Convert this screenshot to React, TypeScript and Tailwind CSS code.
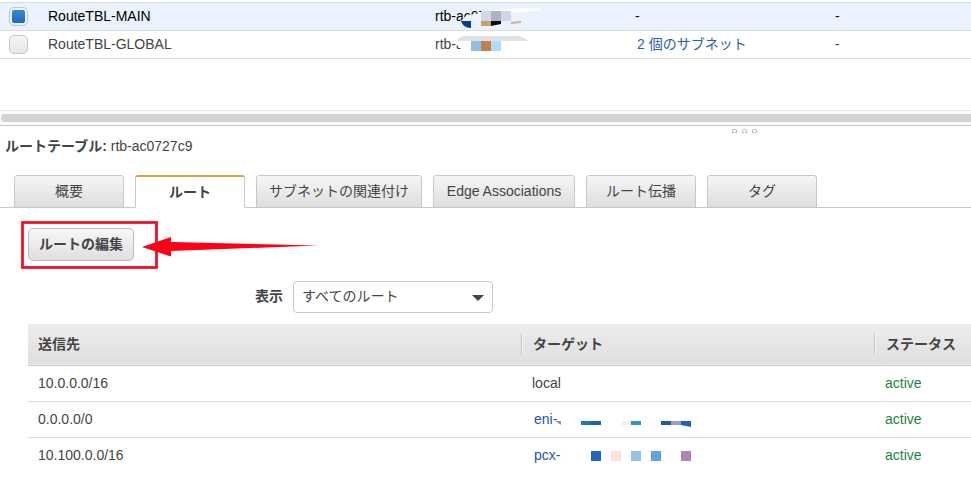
import { useState } from 'react'
import type { ReactNode } from 'react'
import clsx from 'clsx'

const tabs = [
  { label: '概要', width: 'min-w-[110px]' },
  { label: 'ルート', width: 'min-w-[110px]' },
  { label: 'サブネットの関連付け', width: 'min-w-[166px]' },
  { label: 'Edge Associations', width: 'min-w-[142px]' },
  { label: 'ルート伝播', width: 'min-w-[110px]' },
  { label: 'タグ', width: 'min-w-[110px]' },
]

type RouteTable = {
  name: string
  id: string
  mask: ReactNode
  subnets: string | null
}

const routeTables: RouteTable[] = [
  {
    name: 'RouteTBL-MAIN',
    id: 'rtb-ac072',
    subnets: null,
    mask: (
      <>
        <path d="M37 17 L42 12 L58 10 L76 8 H120 V26 H41 Z" fill="#eaf2fd" />
        <path d="M50 10 Q85 5 112 5 Q118 5 114 8 L76 10 Z" fill="#ffffff" />
        <rect x="56" y="8" width="10" height="10" fill="#d3d8e9" />
        <rect x="66" y="8" width="10" height="10" fill="#aab4cb" />
        <rect x="76" y="8" width="10" height="10" fill="#d2d5e8" />
        <path d="M36 18 H46 V25 Q38 25 36 18 Z" fill="#0d3b88" />
        <rect x="56" y="18" width="10" height="5" fill="#c9a061" />
        <path d="M66 18 H76 V21 L66 23 Z" fill="#0a0a0a" />
        <path d="M86 19 L96 18 V20 L86 21 Z" fill="#cfb096" />
      </>
    ),
  },
  {
    name: 'RouteTBL-GLOBAL',
    id: 'rtb-a',
    subnets: '2 個のサブネット',
    mask: (
      <>
        <path d="M32 4 V14 L39 20 H60 V4 Z" fill="#ffffff" />
        <path d="M32 10 Q34 5 40 5 L92 5 Q100 6 103 10 Z" fill="#e0e1e2" />
        <rect x="46" y="10" width="10" height="10" fill="#8fbfe5" />
        <rect x="56" y="10" width="10" height="10" fill="#c27f46" />
        <rect x="66" y="10" width="10" height="10" fill="#afdcfa" />
      </>
    ),
  },
]

type Route = {
  destination: string
  target: string
  mask?: ReactNode
}

const routes: Route[] = [
  { destination: '10.0.0.0/16', target: 'local' },
  {
    destination: '0.0.0.0/0',
    target: 'eni-',
    mask: (
      <>
        <path d="M34 19 H40 V23 Z" fill="#b07fb4" />
        <rect x="60" y="19" width="10" height="4" fill="#2374c4" />
        <rect x="70" y="19" width="10" height="4" fill="#1f62b2" />
        <rect x="100" y="19" width="10" height="4" fill="#fdf0de" />
        <rect x="110" y="19" width="10" height="4" fill="#2f93cf" />
        <rect x="140" y="19" width="10" height="4" fill="#1b5ca8" />
        <rect x="150" y="19" width="10" height="4" fill="#a09ac8" />
        <path d="M160 19 H170 V25 L160 23 Z" fill="#1f64b5" />
      </>
    ),
  },
  {
    destination: '10.100.0.0/16',
    target: 'pcx-',
    mask: (
      <>
        <rect x="70" y="13" width="10" height="10" fill="#1f66b8" />
        <rect x="90" y="13" width="10" height="10" fill="#fde3dc" />
        <rect x="110" y="13" width="10" height="10" fill="#93c4e6" />
        <rect x="130" y="13" width="10" height="10" fill="#62a3d9" />
        <rect x="160" y="13" width="10" height="10" fill="#b186b6" />
      </>
    ),
  },
]

function RouteTableList() {
  const [selected, setSelected] = useState('RouteTBL-MAIN')

  return (
    <section className="pt-0.5">
      <table className="w-full table-fixed border-collapse border-t border-[#d9dcdf] text-left">
        <colgroup>
          <col className="w-[38px]" />
          <col className="w-[387px]" />
          <col className="w-[200px]" />
          <col className="w-[200px]" />
          <col />
        </colgroup>
        <tbody>
          {routeTables.map((table) => {
            const checked = table.name === selected
            return (
              <tr
                key={table.name}
                className={clsx(
                  'h-7 border-b border-[#dcdddf]',
                  checked ? 'bg-[#eaf2fd] text-black' : 'text-[#444444]'
                )}
              >
                <td className="pl-[9px]">
                  <input
                    type="checkbox"
                    aria-label={table.name}
                    checked={checked}
                    onChange={() => setSelected(table.name)}
                    className="block size-[19px] appearance-none rounded-[5px] border border-[#c4c6c9] bg-gradient-to-b from-[#f6f6f6] to-[#e6e6e6] bg-clip-border p-0.5 checked:bg-[#eef3fb] checked:from-[#3d8ad8] checked:to-[#1c66bb] checked:bg-clip-content"
                  />
                </td>
                <td className="pb-0.5 pl-2.5">{table.name}</td>
                <td className="relative pb-0.5 pl-2.5">
                  {table.id}
                  <svg className="absolute top-0 left-0 h-7 w-[130px]" aria-hidden="true">
                    {table.mask}
                  </svg>
                </td>
                <td className="pb-0.5 pl-2.5">
                  {table.subnets ? (
                    <a href="#subnets" className="pl-0.5 text-[#2d5fa8]">
                      {table.subnets}
                    </a>
                  ) : (
                    '-'
                  )}
                </td>
                <td className="pb-0.5 pl-2.5">-</td>
              </tr>
            )
          })}
        </tbody>
      </table>

      {/* Horizontal scroll track */}
      <div className="mt-[51px] border-t border-[#e6e6e6] border-b border-b-[#c6c6c6] bg-[#fafafa] py-[3px]">
        <div className="ml-px h-2 rounded-l-full bg-[#d2d2d2]" />
      </div>
    </section>
  )
}

function SplitHandle() {
  return (
    <svg className="ml-[732px] block h-2.5 w-[26px]" fill="none" stroke="#b9b9b9" aria-hidden="true">
      <path d="M0.5 6 V4 L1.5 3.5 H3.5 L4.5 4 V6 M0 6.5 H2 M3 6.5 H5" />
      <path d="M10.5 6 V4 L11.5 3.5 H13.5 L14.5 4 V6 M10 6.5 H12 M13 6.5 H15" />
      <path d="M20.5 6 V4 L21.5 3.5 H23.5 L24.5 4 V6 M20 6.5 H22 M23 6.5 H25" />
    </svg>
  )
}

function Tabs() {
  const [active, setActive] = useState('ルート')

  return (
    <div role="tablist" className="flex gap-[11px] border-b border-[#c8c8c8] pl-3.5">
      {tabs.map(({ label, width }) => (
        <button
          key={label}
          role="tab"
          aria-selected={label === active}
          onClick={() => setActive(label)}
          className={clsx(
            '-mb-px h-[33px] rounded-t-[3px] border px-3 leading-5 whitespace-nowrap',
            width,
            label === active
              ? 'border-x-[#c8c8c8] border-t-2 border-t-[#e0a045] border-b-white bg-white font-bold'
              : 'border-[#c8c8c8] bg-gradient-to-b from-[#f6f6f6] to-[#dedede] pb-0.5'
          )}
        >
          {label}
        </button>
      ))}
    </div>
  )
}

function EditRoutes() {
  return (
    <div className="relative mt-5 ml-7 w-fit">
      <button className="h-[33px] rounded-[5px] border border-[#bcbcbc] bg-gradient-to-b from-[#f7f7f7] to-[#dfdfdf] px-2.5 pb-0.5 font-bold">
        ルートの編集
      </button>
      {/* Red frame and arrow */}
      <svg
        className="pointer-events-none absolute -top-2 -left-2 h-[50px] w-[300px]"
        aria-hidden="true"
      >
        <rect x="2.5" y="2.5" width="134" height="45" fill="none" stroke="#ee1125" strokeWidth="2.8" />
        <path d="M122 27 L151 17 V22 L298 25.5 L151 31 V36.5 Z" fill="#fb0017" />
      </svg>
    </div>
  )
}

function RouteFilter() {
  return (
    <div className="mt-5 ml-[255px] flex items-center gap-2.5">
      <label htmlFor="route-filter" className="pb-0.5 font-bold">
        表示
      </label>
      <div className="relative">
        <select
          id="route-filter"
          className="block h-8 w-[200px] appearance-none rounded-[4px] border border-[#c8c8c8] bg-white px-2 pb-0.5"
        >
          <option>すべてのルート</option>
        </select>
        <svg
          className="pointer-events-none absolute top-3.5 right-[9px] h-1.5 w-3"
          viewBox="0 0 12 6"
          fill="#444444"
          aria-hidden="true"
        >
          <path d="M0 0 H12 L6 6 Z" />
        </svg>
      </div>
    </div>
  )
}

function RoutesTable() {
  return (
    <div className="mt-[11px] pl-7">
      <table className="w-full table-fixed border-collapse text-left">
        <colgroup>
          <col />
          <col className="w-[353px]" />
          <col className="w-[97px]" />
        </colgroup>
        <thead>
          <tr className="h-[41px] border-b border-[#c6c6c6] bg-gradient-to-b from-[#ededed] to-[#dfdfdf]">
            <th className="pl-2.5">送信先</th>
            <th>
              <div className="h-5 border-l border-[#c4c4c4] pl-[11px] leading-5 shadow-[inset_1px_0_0_#f6f6f6]">
                ターゲット
              </div>
            </th>
            <th>
              <div className="h-5 border-l border-[#c4c4c4] pl-[11px] leading-5 whitespace-nowrap shadow-[inset_1px_0_0_#f6f6f6]">
                ステータス
              </div>
            </th>
          </tr>
        </thead>
        <tbody>
          {routes.map((route) => (
            <tr key={route.destination} className="h-9 border-b border-[#dcdcdc] last:border-b-0">
              <td className="pl-2.5">{route.destination}</td>
              <td className="relative pl-[11px]">
                {route.mask ? (
                  <>
                    <a href="#target" className="pl-0.5 text-[#2458a6]">
                      {route.target}
                    </a>
                    <svg className="absolute top-0 left-0 h-9 w-[180px]" aria-hidden="true">
                      {route.mask}
                    </svg>
                  </>
                ) : (
                  route.target
                )}
              </td>
              <td className="pl-[11px] text-[#1f8340]">active</td>
            </tr>
          ))}
        </tbody>
      </table>
    </div>
  )
}

export default function App() {
  return (
    <main className="min-h-screen overflow-hidden bg-white font-['Liberation_Sans','Noto_Sans_CJK_JP',sans-serif] text-[14px] leading-5 text-[#444444]">
      <RouteTableList />
      <SplitHandle />
      <h2 className="mb-[19px] h-5 pl-[5px]">
        <b>ルートテーブル:</b> rtb-ac0727c9
      </h2>
      <Tabs />
      <EditRoutes />
      <RouteFilter />
      <RoutesTable />
    </main>
  )
}
